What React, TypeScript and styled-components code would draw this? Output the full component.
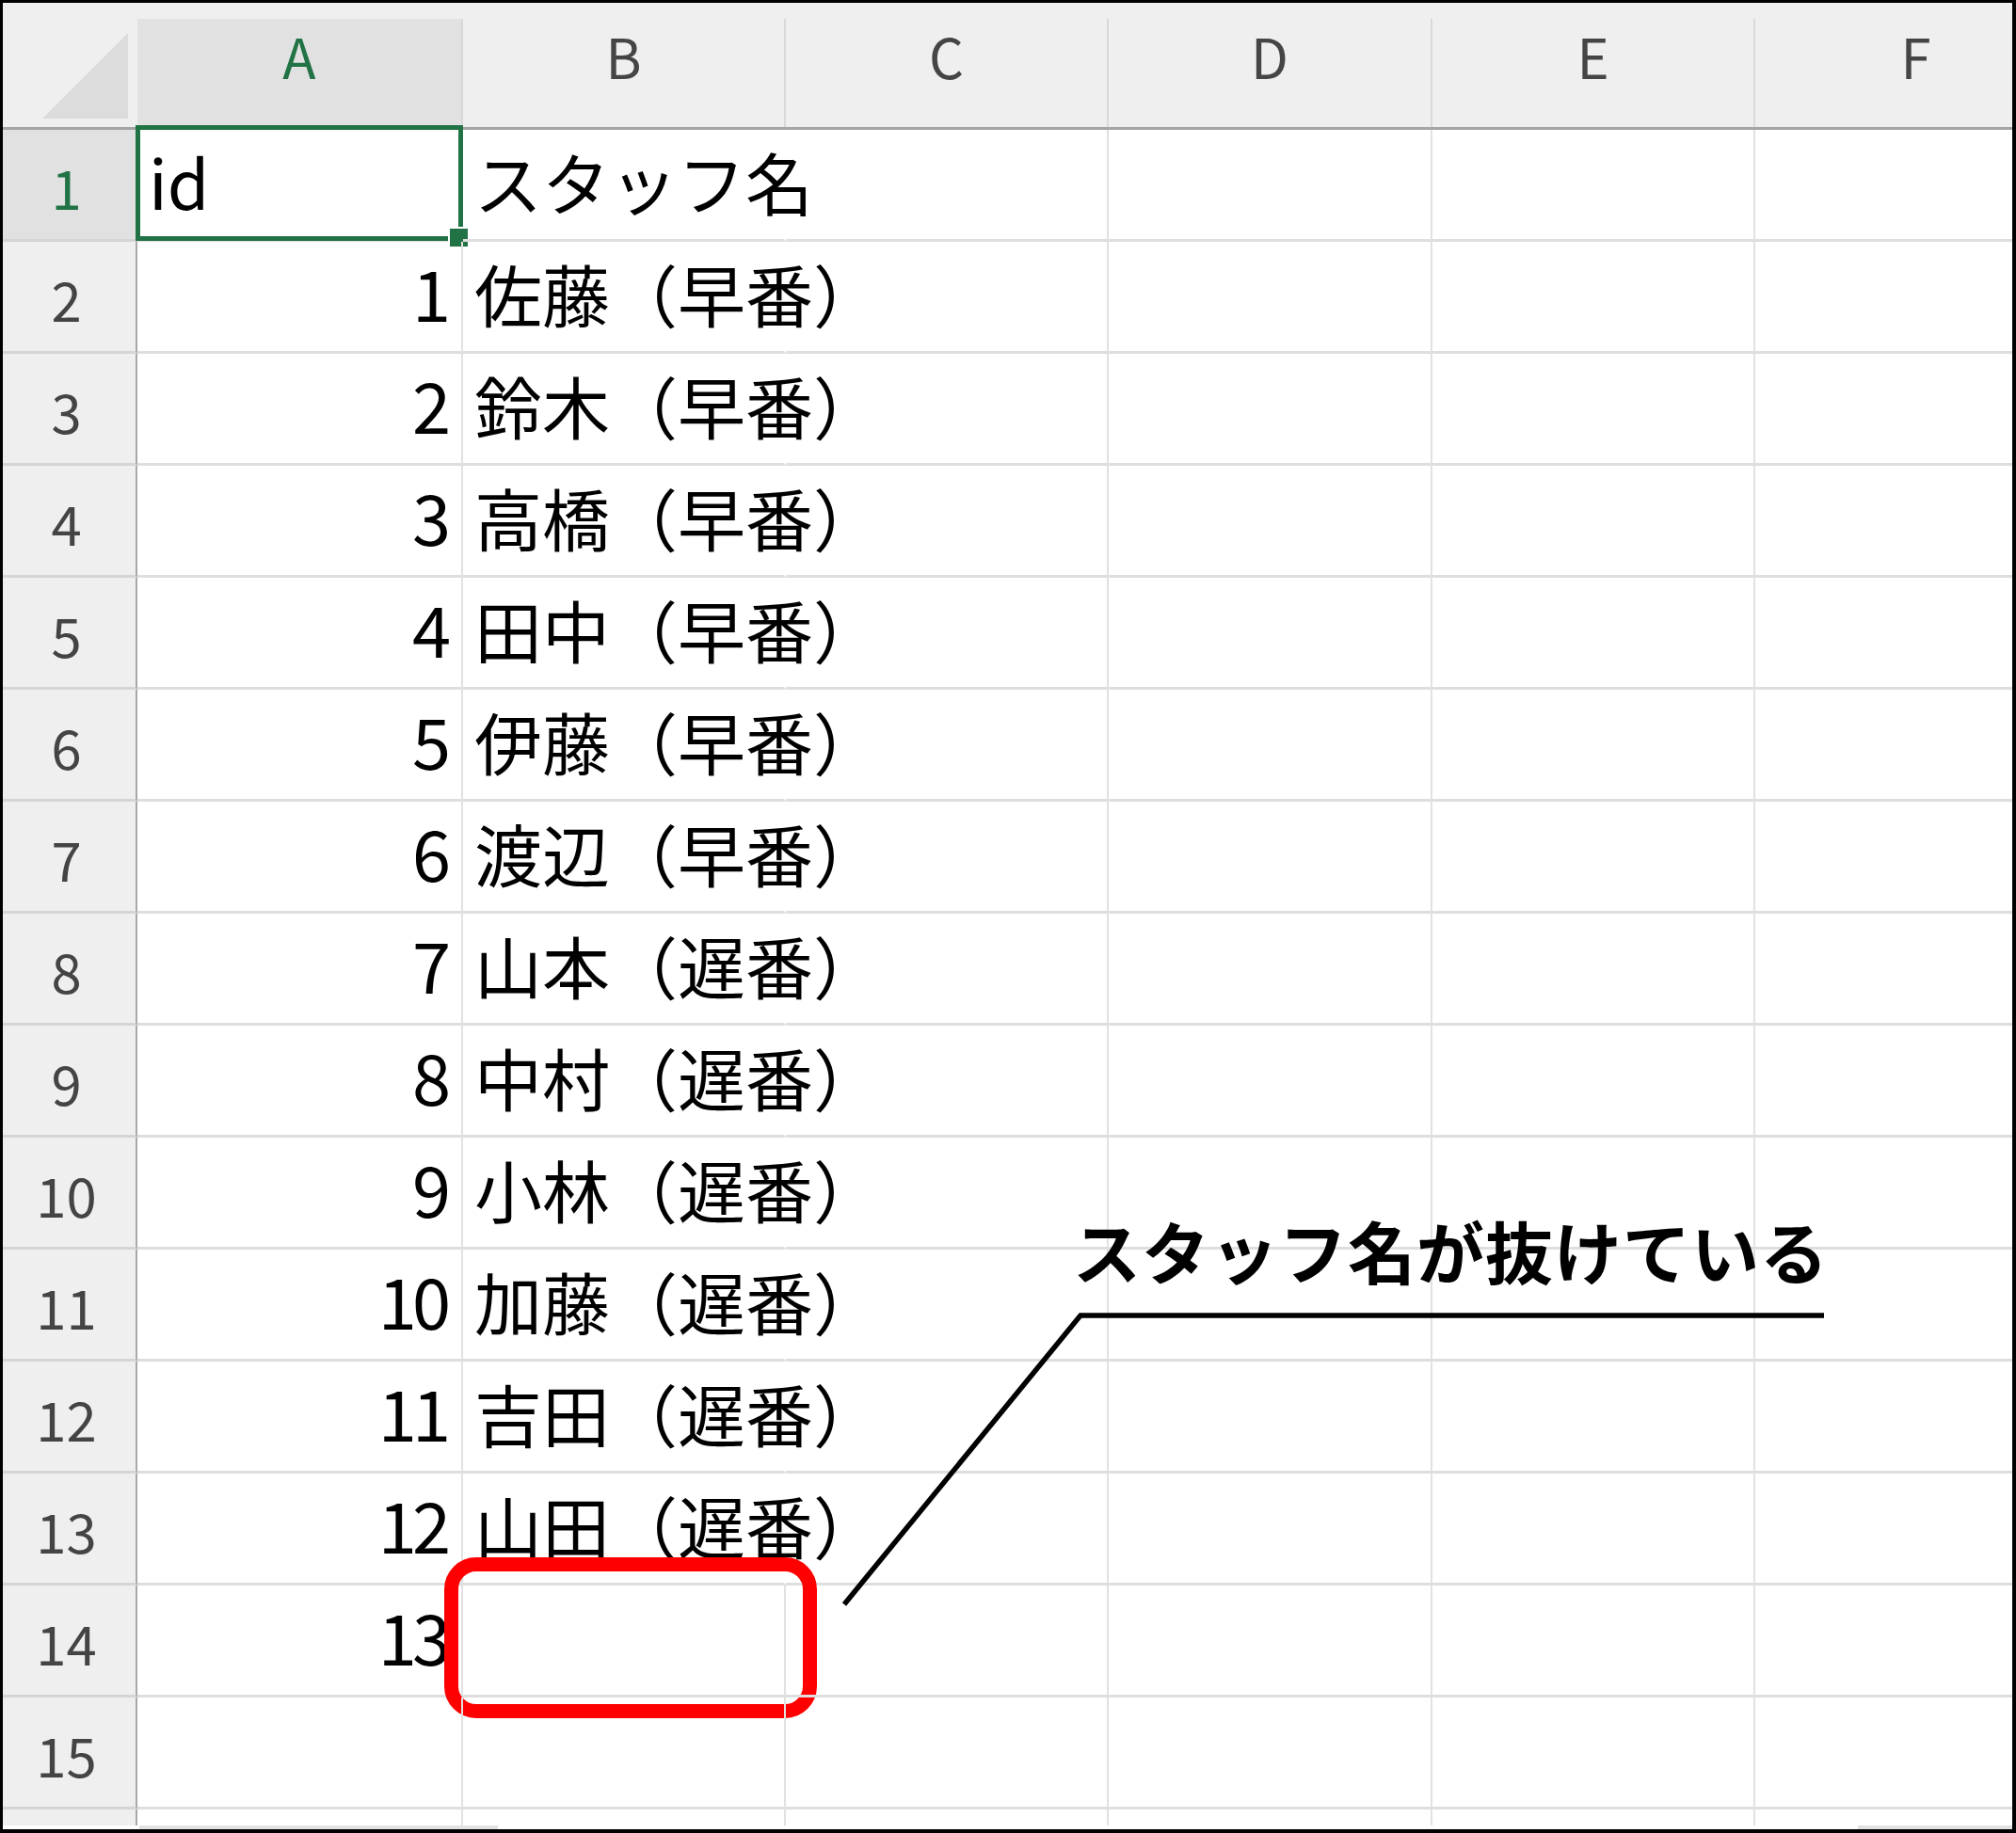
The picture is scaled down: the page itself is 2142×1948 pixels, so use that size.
import React from "react";
import styled, { createGlobalStyle, css } from "styled-components";

const COLS = "143px 346px 343px 343px 344px 343px 343px";
const LETTERS = ["A", "B", "C", "D", "E", "F"];

const GlobalStyle = createGlobalStyle`
  body {
    margin: 0;
    background: #fff;
    font-family: "Noto Sans CJK JP", "Noto Sans", sans-serif;
  }
`;

const Frame = styled.div`
  position: relative;
  width: 2142px;
  height: 1948px;
  box-sizing: border-box;
  border: 3px solid #000;
  border-right-width: 4px;
  border-bottom-width: 4px;
  display: flex;
  flex-direction: column;
  background: #fff;
  overflow: hidden;
`;

const HeaderRow = styled.div`
  display: grid;
  grid-template-columns: ${COLS};
  height: 135px;
  box-sizing: border-box;
  padding-top: 17px;
  background: #efefef;
  border-bottom: 3px solid #a5a5a5;
`;

const Corner = styled.div`
  display: flex;
  align-items: flex-end;
  justify-content: flex-end;
  padding: 0 10px 9px 0;
`;

const CornerMark = styled.div`
  width: 91px;
  height: 91px;
  background: #dcdcdc;
  clip-path: polygon(0 100%, 100% 100%, 100% 0);
`;

const ColHead = styled.div<{ $active?: boolean }>`
  background: ${(p) => (p.$active ? "#e1e1e1" : "transparent")};
  color: ${(p) => (p.$active ? "#217346" : "#454545")};
  border-right: 2px solid #d9d9d9;
  font-size: 58px;
  line-height: 1;
  text-align: center;
  padding-top: 10px;
`;

const SheetRow = styled.div`
  display: grid;
  grid-template-columns: ${COLS};
  height: 119px;
`;

const RowHead = styled.div<{ $active?: boolean }>`
  background: ${(p) => (p.$active ? "#e1e1e1" : "#efefef")};
  color: ${(p) => (p.$active ? "#217346" : "#444")};
  border-right: 2px solid #a9a9a9;
  border-bottom: 3px solid #d5d5d5;
  font-size: 58px;
  line-height: 1;
  text-align: center;
  padding: 31px 6px 0 0;
`;

const Cell = styled.div<{ $num?: boolean; $spill?: boolean }>`
  position: relative;
  border-right: 2px solid ${(p) => (p.$spill ? "transparent" : "#e1e1e1")};
  border-bottom: 3px solid #dedede;
  white-space: nowrap;
  color: #000;
  line-height: 1;
  font-size: 72px;
  padding-top: 18px;
  ${(p) =>
    p.$num
      ? css`
          font-size: 74px;
          padding-top: 16px;
          letter-spacing: -5px;
          text-align: right;
          padding-right: 16px;
        `
      : css`
          padding-left: 12px;
        `}
`;

const Selection = styled.div`
  position: absolute;
  left: -2px;
  top: -5px;
  right: -2px;
  bottom: -2px;
  border: 5px solid #217346;
`;

const FillHandle = styled.span`
  position: absolute;
  right: -9px;
  bottom: -10px;
  width: 19px;
  height: 19px;
  background: #217346;
  border: 2px solid #fff;
`;

const Highlight = styled.div`
  position: absolute;
  left: -20px;
  top: -30px;
  right: -35px;
  bottom: -25px;
  border: 15px solid #ff0000;
  border-radius: 34px;
`;

const Tail = styled.div`
  flex: 1;
  display: flex;
  flex-direction: column;
`;

const TailGrid = styled.div`
  flex: 1;
  display: grid;
  grid-template-columns: ${COLS};
`;

const TailHead = styled.div`
  background: #efefef;
  border-right: 2px solid #a9a9a9;
`;

const TailCell = styled.div`
  border-right: 2px solid #e1e1e1;
`;

const ScrollStrip = styled.div`
  height: 4px;
  display: flex;
  padding-left: 145px;
`;

const ScrollPiece = styled.div<{ $w: number }>`
  width: ${(p) => p.$w}px;
  background: #e2e2e2;
`;

const Spacer = styled.div`
  flex: 1;
`;

const Callout = styled.svg`
  position: absolute;
  left: 889px;
  top: 1389px;
  overflow: visible;
`;

const Note = styled.div`
  position: absolute;
  left: 1137px;
  top: 1289px;
  font-size: 72px;
  font-weight: 700;
  letter-spacing: 1px;
  line-height: 1;
  white-space: nowrap;
  color: #000;
`;

const rows: [string | number, string][] = [
  ["id", "スタッフ名"],
  [1, "佐藤（早番）"],
  [2, "鈴木（早番）"],
  [3, "高橋（早番）"],
  [4, "田中（早番）"],
  [5, "伊藤（早番）"],
  [6, "渡辺（早番）"],
  [7, "山本（遅番）"],
  [8, "中村（遅番）"],
  [9, "小林（遅番）"],
  [10, "加藤（遅番）"],
  [11, "吉田（遅番）"],
  [12, "山田（遅番）"],
  [13, ""],
  ["", ""],
];

const App = () => {
  return (
    <Frame>
      <GlobalStyle />
      <HeaderRow>
        <Corner>
          <CornerMark />
        </Corner>
        {LETTERS.map((l) => (
          <ColHead key={l} $active={l === "A"}>
            {l}
          </ColHead>
        ))}
      </HeaderRow>

      {rows.map(([id, name], i) => (
        <SheetRow key={i}>
          <RowHead $active={i === 0}>{i + 1}</RowHead>
          <Cell $num={typeof id === "number"}>
            {id}
            {i === 0 && (
              <>
                <Selection />
                <FillHandle />
              </>
            )}
          </Cell>
          <Cell $spill={name !== ""}>
            {name}
            {i === 13 && <Highlight />}
          </Cell>
          <Cell />
          <Cell />
          <Cell />
          <Cell />
        </SheetRow>
      ))}

      <Tail>
        <TailGrid>
          <TailHead />
          {LETTERS.map((l) => (
            <TailCell key={l} />
          ))}
        </TailGrid>
        <ScrollStrip>
          <ScrollPiece $w={381} />
          <Spacer />
          <ScrollPiece $w={164} />
        </ScrollStrip>
      </Tail>

      <Callout width="1050" height="320" viewBox="0 0 1050 320">
        <polyline
          points="5,313 256,6 1046,6"
          fill="none"
          stroke="#000"
          strokeWidth="5.5"
          strokeLinejoin="miter"
        />
      </Callout>
      <Note>スタッフ名が抜けている</Note>
    </Frame>
  );
};

export default App;
